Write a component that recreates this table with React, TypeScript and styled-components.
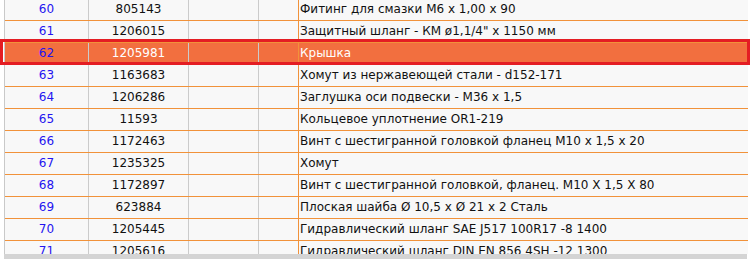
import React from "react";
import styled, { createGlobalStyle } from "styled-components";

const Global = createGlobalStyle`
  html, body { margin: 0; padding: 0; background: #ffffff; }
  body { font-family: "DejaVu Sans", Verdana, sans-serif; }
`;

type Item = { n: number; code: string; name: string };

const items: Item[] = [
  { n: 60, code: "805143", name: "Фитинг для смазки М6 x 1,00 x 90" },
  { n: 61, code: "1206015", name: "Защитный шланг - КМ ø1,1/4\" x 1150 мм" },
  { n: 62, code: "1205981", name: "Крышка" },
  { n: 63, code: "1163683", name: "Хомут из нержавеющей стали - d152-171" },
  { n: 64, code: "1206286", name: "Заглушка оси подвески - М36 x 1,5" },
  { n: 65, code: "11593", name: "Кольцевое уплотнение OR1-219" },
  { n: 66, code: "1172463", name: "Винт с шестигранной головкой фланец М10 x 1,5 x 20" },
  { n: 67, code: "1235325", name: "Хомут" },
  { n: 68, code: "1172897", name: "Винт с шестигранной головкой, фланец. M10 X 1,5 X 80" },
  { n: 69, code: "623884", name: "Плоская шайба Ø 10,5 x Ø 21 x 2 Сталь" },
  { n: 70, code: "1205445", name: "Гидравлический шланг SAE J517 100R17 -8 1400" },
  { n: 71, code: "1205616", name: "Гидравлический шланг DIN EN 856 4SH -12 1300" },
];

const Viewport = styled.div`
  width: 750px;
  height: 259px;
  overflow: hidden;
  display: flex;
  flex-direction: column;
`;

const ScrollArea = styled.div`
  height: 254px;
  overflow: hidden;
  flex: none;
`;

const Table = styled.div`
  margin: -1px 0 0 4px;
  width: 743px;
  border-left: 1px solid #c9c9c9;
  display: flex;
  flex-direction: column;
`;

const Row = styled.div<{ $active?: boolean }>`
  position: relative;
  display: grid;
  grid-template-columns: 84px 100px 70px 40px 1fr;
  height: 21px;
  border-bottom: 1px solid #f1923a;
  background: ${(p) => (p.$active ? "#f26f3f" : "#f8f8f8")};
  font-size: 12px;
  line-height: 21px;
  color: ${(p) => (p.$active ? "#ffffff" : "#111111")};
`;

const Highlight = styled.div`
  position: absolute;
  left: -5px;
  top: -4px;
  width: 750px;
  height: 26px;
  box-sizing: border-box;
  border: 3px solid #e41d23;
  pointer-events: none;
`;

const Cell = styled.div<{ $align?: "center" | "left"; $line?: "gray" | "orange" | "none" }>`
  text-align: ${(p) => p.$align ?? "center"};
  border-right: ${(p) =>
    p.$line === "none" ? "none" : p.$line === "orange" ? "1px solid #f1923a" : "1px solid #cbcbcb"};
  padding-left: ${(p) => (p.$align === "left" ? "1px" : "0")};
  white-space: nowrap;
  overflow: hidden;
`;

const NumCell = styled(Cell)`
  color: #2414f0;
`;

const HScroll = styled.div`
  margin-left: 4px;
  width: 743px;
  height: 5px;
  background: #d4d4d4;
  flex: none;
`;

export default function App() {
  return (
    <>
      <Global />
      <Viewport>
        <ScrollArea>
          <Table>
            {items.map((it) => (
              <Row key={it.n} $active={it.n === 62}>
                <NumCell>{it.n}</NumCell>
                <Cell>{it.code}</Cell>
                <Cell />
                <Cell $line="orange" />
                <Cell $align="left" $line="none">{it.name}</Cell>
                {it.n === 62 && <Highlight />}
              </Row>
            ))}
          </Table>
        </ScrollArea>
        <HScroll />
      </Viewport>
    </>
  );
}
